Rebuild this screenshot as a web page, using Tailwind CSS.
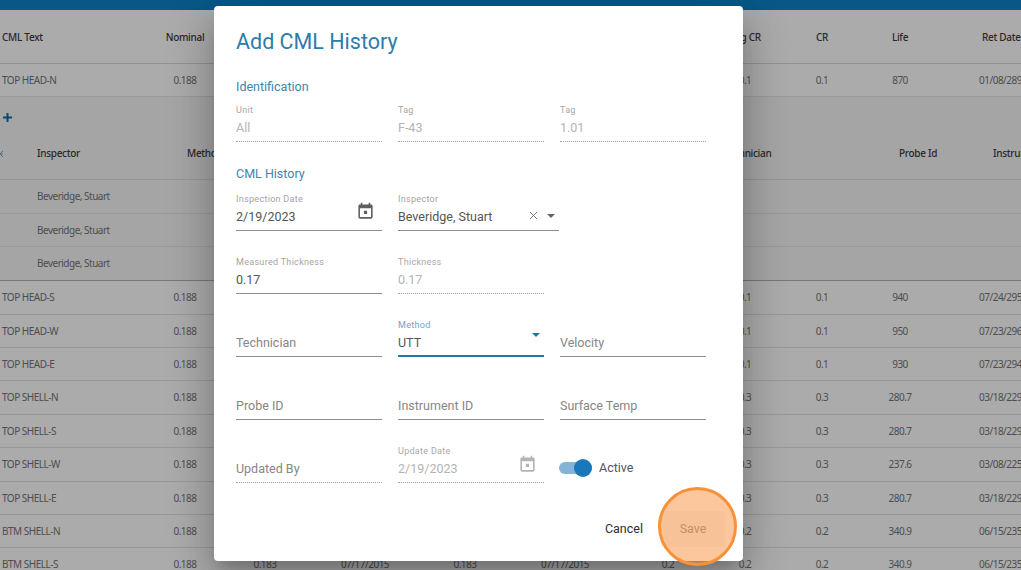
<!DOCTYPE html>
<html lang="en">
<head>
    <meta charset="UTF-8">
    <title>Add CML History</title>
    <script src="https://cdn.jsdelivr.net/npm/@tailwindcss/browser@4"></script>
</head>
<body class="bg-white">
<div class="relative w-[1021px] h-[570px] overflow-hidden bg-white font-['Noto_Sans',sans-serif] text-[10px] tracking-[-0.5px] text-[#747474]">

    <!-- page behind the dialog -->
    <div class="h-[10px] bg-[#0d83c9]"></div>

    <div class="grid grid-cols-[150px_70px_90px_110px_90px_110px_96px_58px_96px_60px_120px] items-center text-center h-[54px] pt-[1px] border-b border-[#d8d8d8] font-medium tracking-[-0.3px] text-[#3c3c3c]">
        <span class="text-left pl-[2px]">CML Text</span><span>Nominal</span><span></span><span></span><span></span><span></span><span></span><span>Avg CR</span><span>CR</span><span>Life</span><span class="text-left pl-[52px]">Ret Date</span>
    </div>
    <div class="grid grid-cols-[150px_70px_90px_110px_90px_110px_96px_58px_96px_60px_120px] items-center text-center h-[33px] border-b border-[#e6e6e6]">
        <span class="text-left pl-[2px]">TOP HEAD-N</span><span>0.188</span><span></span><span></span><span></span><span></span><span></span><span>0.1</span><span>0.1</span><span>870</span><span class="text-left pl-[49px]">01/08/2897</span>
    </div>

    <!-- expanded history rows -->
    <div class="bg-[#f7f7f7]">
        <div class="flex items-center h-[41px] pl-[2px]">
            <svg class="w-[11px] h-[11px]" viewBox="0 0 11 11"><path d="M4.500 1h2v3.500h3.500v2h-3.500v3.500h-2v-3.500h-3.500v-2h3.500z" fill="#0f6fa8"/></svg>
        </div>
        <div class="grid grid-cols-[37px_150px_537px_175px_94px_100px] items-center h-[42px] pb-[10px] border-b border-[#e2e2e2] font-medium tracking-[-0.3px] text-[#3c3c3c]">
            <svg class="w-[3px] h-[8px]" viewBox="0 0 3 8"><path d="M0 4l3-3M0 4h3M0 4l3 3" stroke="#7ba3bd" fill="none"/></svg><span>Inspector</span><span>Method</span><span>Technician</span><span>Probe Id</span><span>Instrument</span>
        </div>
        <div class="grid grid-cols-[37px_150px] items-center h-[34px] border-b border-[#e6e6e6]"><span></span><span>Beveridge, Stuart</span></div>
        <div class="grid grid-cols-[37px_150px] items-center h-[33px] border-b border-[#e6e6e6]"><span></span><span>Beveridge, Stuart</span></div>
        <div class="grid grid-cols-[37px_150px] items-center h-[34px] border-b border-[#b4b4b4]"><span></span><span>Beveridge, Stuart</span></div>
    </div>

    <div class="grid grid-cols-[150px_70px_90px_110px_90px_110px_96px_58px_96px_60px_120px] items-center text-center h-[34px] border-b border-[#e2e2e2]">
        <span class="text-left pl-[2px]">TOP HEAD-S</span><span>0.188</span><span></span><span></span><span></span><span></span><span></span><span>0.1</span><span>0.1</span><span>940</span><span class="text-left pl-[49px]">07/24/2955</span>
    </div>
    <div class="grid grid-cols-[150px_70px_90px_110px_90px_110px_96px_58px_96px_60px_120px] items-center text-center h-[33px] border-b border-[#e2e2e2]">
        <span class="text-left pl-[2px]">TOP HEAD-W</span><span>0.188</span><span></span><span></span><span></span><span></span><span></span><span>0.1</span><span>0.1</span><span>950</span><span class="text-left pl-[49px]">07/23/2965</span>
    </div>
    <div class="grid grid-cols-[150px_70px_90px_110px_90px_110px_96px_58px_96px_60px_120px] items-center text-center h-[33px] border-b border-[#e2e2e2]">
        <span class="text-left pl-[2px]">TOP HEAD-E</span><span>0.188</span><span></span><span></span><span></span><span></span><span></span><span>0.1</span><span>0.1</span><span>930</span><span class="text-left pl-[49px]">07/23/2945</span>
    </div>
    <div class="grid grid-cols-[150px_70px_90px_110px_90px_110px_96px_58px_96px_60px_120px] items-center text-center h-[34px] border-b border-[#e2e2e2]">
        <span class="text-left pl-[2px]">TOP SHELL-N</span><span>0.188</span><span></span><span></span><span></span><span></span><span></span><span>0.3</span><span>0.3</span><span>280.7</span><span class="text-left pl-[49px]">03/18/2296</span>
    </div>
    <div class="grid grid-cols-[150px_70px_90px_110px_90px_110px_96px_58px_96px_60px_120px] items-center text-center h-[33px] border-b border-[#e2e2e2]">
        <span class="text-left pl-[2px]">TOP SHELL-S</span><span>0.188</span><span></span><span></span><span></span><span></span><span></span><span>0.3</span><span>0.3</span><span>280.7</span><span class="text-left pl-[49px]">03/18/2296</span>
    </div>
    <div class="grid grid-cols-[150px_70px_90px_110px_90px_110px_96px_58px_96px_60px_120px] items-center text-center h-[34px] border-b border-[#e2e2e2]">
        <span class="text-left pl-[2px]">TOP SHELL-W</span><span>0.188</span><span></span><span></span><span></span><span></span><span></span><span>0.3</span><span>0.3</span><span>237.6</span><span class="text-left pl-[49px]">03/08/2251</span>
    </div>
    <div class="grid grid-cols-[150px_70px_90px_110px_90px_110px_96px_58px_96px_60px_120px] items-center text-center h-[33px] border-b border-[#e2e2e2]">
        <span class="text-left pl-[2px]">TOP SHELL-E</span><span>0.188</span><span></span><span></span><span></span><span></span><span></span><span>0.3</span><span>0.3</span><span>280.7</span><span class="text-left pl-[49px]">03/18/2296</span>
    </div>
    <div class="grid grid-cols-[150px_70px_90px_110px_90px_110px_96px_58px_96px_60px_120px] items-center text-center h-[33px] border-b border-[#e2e2e2]">
        <span class="text-left pl-[2px]">BTM SHELL-N</span><span>0.188</span><span></span><span></span><span></span><span></span><span></span><span>0.2</span><span>0.2</span><span>340.9</span><span class="text-left pl-[49px]">06/15/2356</span>
    </div>
    <div class="grid grid-cols-[150px_70px_90px_110px_90px_110px_96px_58px_96px_60px_120px] items-center text-center h-[33px]">
        <span class="text-left pl-[2px]">BTM SHELL-S</span><span>0.188</span><span>0.183</span><span>07/17/2015</span><span>0.183</span><span>07/17/2015</span><span>0.2</span><span>0.2</span><span>0.2</span><span>340.9</span><span class="text-left pl-[49px]">06/15/2356</span>
    </div>

    <!-- scrim -->
    <div class="absolute inset-0 bg-black/[.33]"></div>

    <!-- dialog -->
    <div class="absolute left-[214px] top-[6px] w-[529px] h-[555px] pl-[22px] bg-white rounded-[4px] shadow-[0_11px_15px_-7px_rgba(0,0,0,.2),0_24px_38px_3px_rgba(0,0,0,.14),0_9px_46px_8px_rgba(0,0,0,.12)] font-['Roboto',sans-serif] tracking-normal text-[12.5px] text-[#555]">
        <h1 class="flex items-center h-[72px] text-[21.5px] text-[#2b7dab]">Add CML History</h1>
        <h2 class="flex items-center h-[18px] text-[12.5px] text-[#3b86ae]">Identification</h2>

        <div class="grid grid-cols-[146px_146px_146px] gap-x-4">
            <div class="flex flex-col justify-end h-[46px] pb-1 border-b border-dotted border-[#a0a0a0] text-[#b4b4b4]">
                <label class="h-[12px] mb-[3px] text-[9px] leading-[12px] tracking-[.3px] text-[#a8a8a8]">Unit</label><span class="h-[18px] leading-[18px]">All</span>
            </div>
            <div class="flex flex-col justify-end h-[46px] pb-1 border-b border-dotted border-[#a0a0a0] text-[#b4b4b4]">
                <label class="h-[12px] mb-[3px] text-[9px] leading-[12px] tracking-[.3px] text-[#a8a8a8]">Tag</label><span class="h-[18px] leading-[18px]">F-43</span>
            </div>
            <div class="flex flex-col justify-end h-[46px] pb-1 border-b border-dotted border-[#a0a0a0] text-[#b4b4b4]">
                <label class="h-[12px] mb-[3px] text-[9px] leading-[12px] tracking-[.3px] text-[#a8a8a8]">Tag</label><span class="h-[18px] leading-[18px]">1.01</span>
            </div>
        </div>

        <h2 class="flex items-center h-[18px] mt-[23px] mb-[2px] text-[12.5px] text-[#3b86ae]">CML History</h2>

        <div class="grid grid-cols-[146px_146px_146px] gap-x-4 gap-y-[17px]">
            <div class="flex flex-col justify-end h-[46px] pb-1 border-b border-[#8c8c8c]">
                <label class="h-[12px] mb-[3px] text-[9px] leading-[12px] tracking-[.3px] text-[#a4a4a4]">Inspection Date</label>
                <div class="flex justify-between h-[18px] leading-[18px]">
                    <span>2/19/2023</span>
                    <svg class="w-[19px] h-[19px] mr-[7px] -mt-[6px] shrink-0" viewBox="0 0 24 24"><path fill="#5f5f5f" d="M14 11h-4v4h4zM16 1v2H8V1H6v2H5c-1.110 0-1.990.9-1.990 2L3 19c0 1.100.89 2 2 2h14c1.100 0 2-.9 2-2V5c0-1.100-.9-2-2-2h-1V1h-2zm3 18H5V8h14v11z"/></svg>
                </div>
            </div>
            <div class="flex flex-col justify-end w-[161px] h-[46px] pb-1 border-b border-[#8c8c8c]">
                <label class="h-[12px] mb-[3px] text-[9px] leading-[12px] tracking-[.3px] text-[#a4a4a4]">Inspector</label>
                <div class="flex items-center h-[18px] leading-[18px]">
                    <span class="flex-1">Beveridge, Stuart</span>
                    <svg class="w-[9px] h-[9px] mr-[9px] -mt-[3px]" viewBox="0 0 9 9"><path d="M1 1l7 7M8 1l-7 7" stroke="#777" stroke-width="1"/></svg>
                    <svg class="w-[8px] h-[4px] mr-[4px] -mt-[2px]" viewBox="0 0 8 4"><path d="M0 0h8L4 4z" fill="#666"/></svg>
                </div>
            </div>
            <div></div>

            <div class="flex flex-col justify-end h-[46px] pb-1 border-b border-[#8c8c8c]">
                <label class="h-[12px] mb-[3px] text-[9px] leading-[12px] tracking-[.3px] text-[#a4a4a4]">Measured Thickness</label><span class="h-[18px] leading-[18px]">0.17</span>
            </div>
            <div class="flex flex-col justify-end h-[46px] pb-1 border-b border-dotted border-[#a0a0a0] text-[#b4b4b4]">
                <label class="h-[12px] mb-[3px] text-[9px] leading-[12px] tracking-[.3px] text-[#a8a8a8]">Thickness</label><span class="h-[18px] leading-[18px]">0.17</span>
            </div>
            <div></div>

            <div class="flex flex-col justify-end h-[46px] pb-1 border-b border-[#8c8c8c] text-[#868686]"><span class="h-[18px] leading-[18px]">Technician</span></div>
            <div class="flex flex-col justify-end h-[46px] pb-[3px] border-b-2 border-[#1f7aa8]">
                <label class="h-[12px] mb-[3px] text-[9px] leading-[12px] tracking-[.3px] text-[#6aa6ca]">Method</label>
                <div class="flex justify-between h-[18px] leading-[18px]">
                    <span>UTT</span>
                    <svg class="w-[8px] h-[4px] mr-[4px] -mt-[1px]" viewBox="0 0 8 4"><path d="M0 0h8L4 4z" fill="#1f7aa8"/></svg>
                </div>
            </div>
            <div class="flex flex-col justify-end h-[46px] pb-1 border-b border-[#8c8c8c] text-[#868686]"><span class="h-[18px] leading-[18px]">Velocity</span></div>

            <div class="flex flex-col justify-end h-[46px] pb-1 border-b border-[#8c8c8c] text-[#868686]"><span class="h-[18px] leading-[18px]">Probe ID</span></div>
            <div class="flex flex-col justify-end h-[46px] pb-1 border-b border-[#8c8c8c] text-[#868686]"><span class="h-[18px] leading-[18px]">Instrument ID</span></div>
            <div class="flex flex-col justify-end h-[46px] pb-1 border-b border-[#8c8c8c] text-[#868686]"><span class="h-[18px] leading-[18px]">Surface Temp</span></div>

            <div class="flex flex-col justify-end h-[46px] pb-1 border-b border-dotted border-[#a0a0a0] text-[#868686]"><span class="h-[18px] leading-[18px]">Updated By</span></div>
            <div class="flex flex-col justify-end h-[46px] pb-1 border-b border-dotted border-[#a0a0a0] text-[#b4b4b4]">
                <label class="h-[12px] mb-[3px] text-[9px] leading-[12px] tracking-[.3px] text-[#a8a8a8]">Update Date</label>
                <div class="flex justify-between h-[18px] leading-[18px]">
                    <span>2/19/2023</span>
                    <svg class="w-[19px] h-[19px] mr-[7px] -mt-[5px] shrink-0" viewBox="0 0 24 24"><path fill="#b4b4b4" d="M14 11h-4v4h4zM16 1v2H8V1H6v2H5c-1.110 0-1.990.9-1.990 2L3 19c0 1.100.89 2 2 2h14c1.100 0 2-.9 2-2V5c0-1.100-.9-2-2-2h-1V1h-2zm3 18H5V8h14v11z"/></svg>
                </div>
            </div>
            <div class="flex items-center h-[46px] pt-[16px] -ml-[1px]">
                <div class="relative w-[33px] h-[12px] rounded-full bg-[#84b3d6]">
                    <div class="absolute right-0 -top-[3px] w-[18px] h-[18px] rounded-full bg-[#1a78ba]"></div>
                </div>
                <span class="ml-[7px] text-[#555]">Active</span>
            </div>
        </div>

        <div class="flex justify-end items-center gap-[10px] h-[36px] mt-[28px] pr-[18px]">
            <button class="h-[36px] px-2 text-[12.5px] font-normal text-[#2e2e2e]">Cancel</button>
            <button class="w-[64px] h-[36px] rounded-[4px] bg-black/[.04] text-[12.5px] font-normal text-[#8e8e8e]">Save</button>
        </div>
    </div>

    <!-- orange highlight around Save -->
    <div class="absolute left-[658px] top-[487px] w-[79px] h-[79px] rounded-full border-[3px] border-[#f79239] bg-[#f98f3c]/50"></div>
</div>
</body>
</html>
